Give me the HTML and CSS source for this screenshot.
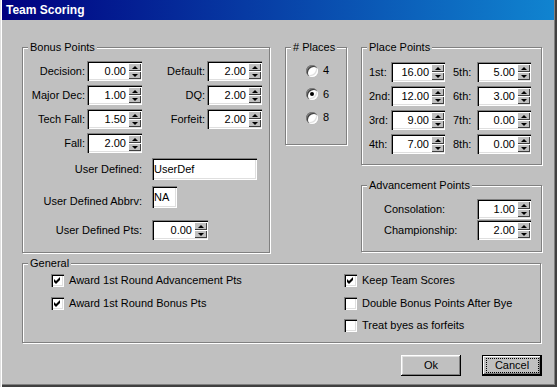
FILE: index.html
```html
<!DOCTYPE html>
<html>
<head>
<meta charset="utf-8">
<title>Team Scoring</title>
<link rel="stylesheet" href="styles.css">
</head>
<body>
<div class="window">
  <div class="titlebar">Team Scoring</div>
  <div class="body">
    <div class="top">
      <fieldset class="group bonus">
        <legend>Bonus Points</legend>
        <div class="bgrid">
          <span class="lbl">Decision:</span>
          <div class="spin"><span class="val">0.00</span><span class="arrows"><span class="ab"><i class="up"></i></span><span class="ab"><i class="dn"></i></span></span></div>
          <span class="lbl">Default:</span>
          <div class="spin"><span class="val">2.00</span><span class="arrows"><span class="ab"><i class="up"></i></span><span class="ab"><i class="dn"></i></span></span></div>
          <span class="lbl">Major Dec:</span>
          <div class="spin"><span class="val">1.00</span><span class="arrows"><span class="ab"><i class="up"></i></span><span class="ab"><i class="dn"></i></span></span></div>
          <span class="lbl">DQ:</span>
          <div class="spin"><span class="val">2.00</span><span class="arrows"><span class="ab"><i class="up"></i></span><span class="ab"><i class="dn"></i></span></span></div>
          <span class="lbl">Tech Fall:</span>
          <div class="spin"><span class="val">1.50</span><span class="arrows"><span class="ab"><i class="up"></i></span><span class="ab"><i class="dn"></i></span></span></div>
          <span class="lbl">Forfeit:</span>
          <div class="spin"><span class="val">2.00</span><span class="arrows"><span class="ab"><i class="up"></i></span><span class="ab"><i class="dn"></i></span></span></div>
          <span class="lbl">Fall:</span>
          <div class="spin"><span class="val">2.00</span><span class="arrows"><span class="ab"><i class="up"></i></span><span class="ab"><i class="dn"></i></span></span></div>
        </div>
        <div class="ud">
          <span class="udl">User Defined:</span>
          <div class="edit ud-name">UserDef</div>
          <span class="udl udl-low">User Defined Abbrv:</span>
          <div class="edit ud-abbr">NA</div>
          <span class="udl udl-pts">User Defined Pts:</span>
          <div class="spin spin-pts"><span class="val">0.00</span><span class="arrows"><span class="ab"><i class="up"></i></span><span class="ab"><i class="dn"></i></span></span></div>
        </div>
      </fieldset>

      <fieldset class="group places">
        <legend># Places</legend>
        <div class="radios">
          <div class="opt"><span class="radio"></span><span>4</span></div>
          <div class="opt"><span class="radio on"></span><span>6</span></div>
          <div class="opt"><span class="radio"></span><span>8</span></div>
        </div>
      </fieldset>

      <div class="rightcol">
        <fieldset class="group placepts">
          <legend>Place Points</legend>
          <div class="pgrid">
            <span>1st:</span>
            <div class="spin"><span class="val">16.00</span><span class="arrows"><span class="ab"><i class="up"></i></span><span class="ab"><i class="dn"></i></span></span></div>
            <span class="pl2">5th:</span>
            <div class="spin"><span class="val">5.00</span><span class="arrows"><span class="ab"><i class="up"></i></span><span class="ab"><i class="dn"></i></span></span></div>
            <span>2nd:</span>
            <div class="spin"><span class="val">12.00</span><span class="arrows"><span class="ab"><i class="up"></i></span><span class="ab"><i class="dn"></i></span></span></div>
            <span class="pl2">6th:</span>
            <div class="spin"><span class="val">3.00</span><span class="arrows"><span class="ab"><i class="up"></i></span><span class="ab"><i class="dn"></i></span></span></div>
            <span>3rd:</span>
            <div class="spin"><span class="val">9.00</span><span class="arrows"><span class="ab"><i class="up"></i></span><span class="ab"><i class="dn"></i></span></span></div>
            <span class="pl2">7th:</span>
            <div class="spin"><span class="val">0.00</span><span class="arrows"><span class="ab"><i class="up"></i></span><span class="ab"><i class="dn"></i></span></span></div>
            <span>4th:</span>
            <div class="spin"><span class="val">7.00</span><span class="arrows"><span class="ab"><i class="up"></i></span><span class="ab"><i class="dn"></i></span></span></div>
            <span class="pl2">8th:</span>
            <div class="spin"><span class="val">0.00</span><span class="arrows"><span class="ab"><i class="up"></i></span><span class="ab"><i class="dn"></i></span></span></div>
          </div>
        </fieldset>
        <fieldset class="group adv">
          <legend>Advancement Points</legend>
          <div class="agrid">
            <span>Consolation:</span>
            <div class="spin"><span class="val">1.00</span><span class="arrows"><span class="ab"><i class="up"></i></span><span class="ab"><i class="dn"></i></span></span></div>
            <span>Championship:</span>
            <div class="spin"><span class="val">2.00</span><span class="arrows"><span class="ab"><i class="up"></i></span><span class="ab"><i class="dn"></i></span></span></div>
          </div>
        </fieldset>
      </div>
    </div>

    <fieldset class="group general">
      <legend>General</legend>
      <div class="gen">
        <div class="gcol gcol-left">
          <div class="opt"><span class="check"><svg width="7" height="7" viewBox="0 0 7 7"><path d="M0 2 L2 4 L6 0 L6 3 L2 7 L0 5 Z" fill="#000"/></svg></span><span>Award 1st Round Advancement Pts</span></div>
          <div class="opt"><span class="check"><svg width="7" height="7" viewBox="0 0 7 7"><path d="M0 2 L2 4 L6 0 L6 3 L2 7 L0 5 Z" fill="#000"/></svg></span><span>Award 1st Round Bonus Pts</span></div>
        </div>
        <div class="gcol">
          <div class="opt"><span class="check"><svg width="7" height="7" viewBox="0 0 7 7"><path d="M0 2 L2 4 L6 0 L6 3 L2 7 L0 5 Z" fill="#000"/></svg></span><span>Keep Team Scores</span></div>
          <div class="opt"><span class="check"></span><span>Double Bonus Points After Bye</span></div>
          <div class="opt"><span class="check"></span><span>Treat byes as forfeits</span></div>
        </div>
      </div>
    </fieldset>

    <div class="buttons">
      <div class="btn">Ok</div>
      <div class="btn btn-default"><span class="focus">Cancel</span></div>
    </div>
  </div>
</div>
</body>
</html>
```

FILE: styles.css
```css
* { box-sizing: border-box; }
html, body { margin: 0; padding: 0; }
body {
  background: #c0c0c0;
  font-family: "Liberation Sans", Arial, sans-serif;
  font-size: 11px;
  line-height: 13px;
  color: #000;
}
.window {
  width: 557px;
  height: 387px;
  background: #c0c0c0;
  display: flex;
  flex-direction: column;
  padding: 0 3px 3px 2px;
  box-shadow: inset 1px 0 #dfdfdf, inset 2px 0 #fff,
    inset -1px -1px #404040, inset -2px -2px #404040, inset -3px -3px #808080;
}
.titlebar {
  flex: none;
  height: 20px;
  background: linear-gradient(to right, #000080, #1084d0);
  color: #fff;
  font-weight: bold;
  font-size: 12px;
  line-height: 21px;
  padding-left: 4px;
}
.body {
  padding: 21px 12px 0 20px;
}
.top {
  display: flex;
  align-items: flex-start;
}

/* group boxes */
fieldset.group {
  margin: 0;
  padding: 0;
  min-width: 0;
  border: 1px solid #808080;
  box-shadow: 1px 1px 0 #fff, inset 1px 1px 0 #fff;
}
fieldset.group legend {
  padding: 0 2px;
  margin-left: 5px;
  line-height: 13px;
  background: #c0c0c0;
}
.bonus { width: 248px; height: 212px; }
.places { width: 62px; height: 104px; margin-left: 15px !important; }
.rightcol { margin-left: 14px; display: flex; flex-direction: column; }
.placepts { width: 181px; height: 124px; }
.placepts legend, .places legend { margin-left: 4px; }
.adv { width: 181px; height: 73px; margin-top: 14px !important; }
.general { width: 519px; height: 86px; margin-top: 4px !important; }

/* spin control */
.spin {
  display: flex;
  height: 20px;
  width: 100%;
  background: #fff;
  padding: 2px 0 2px 2px;
  box-shadow: inset 1px 1px #808080, inset 2px 2px #000,
    inset -1px -1px #fff, inset -2px -2px #dfdfdf;
}
.spin .val {
  flex: 1;
  text-align: right;
  padding-right: 2px;
  line-height: 16px;
}
.arrows {
  width: 13px;
  display: flex;
  flex-direction: column;
  margin-right: 1px;
}
.ab {
  flex: 1;
  background: #c0c0c0;
  display: flex;
  align-items: center;
  justify-content: center;
  box-shadow: inset 1px 1px #fff, inset -1px -1px #404040;
}
.ab i { display: block; width: 0; height: 0; border-left: 3px solid transparent; border-right: 3px solid transparent; }
.ab i.up { border-bottom: 3px solid #000; }
.ab i.dn { border-top: 3px solid #000; }

.edit {
  background: #fff;
  height: 22px;
  padding: 0 2px;
  line-height: 22px;
  box-shadow: inset 1px 1px #808080, inset 2px 2px #000,
    inset -1px -1px #fff, inset -2px -2px #dfdfdf;
}
.ud-name { width: 105px; }
.ud-abbr { width: 25px; }

/* bonus layout */
.bgrid {
  display: grid;
  grid-template-columns: 64px 55px 65px 55px;
  grid-auto-rows: 20px;
  row-gap: 4px;
  align-items: center;
  margin-top: 7px;
}
.lbl { text-align: right; padding-right: 2px; }
.ud {
  display: grid;
  grid-template-columns: 119px auto;
  column-gap: 10px;
  row-gap: 6px;
  align-items: center;
  justify-items: start;
  margin-top: 5px;
}
.udl { justify-self: end; }
.udl-low { align-self: end; }
.udl-pts { margin-top: 6px; }
.spin-pts { width: 56px; margin-top: 6px; }

/* places */
.radios {
  display: flex;
  flex-direction: column;
  gap: 10.5px;
  margin-top: 10px;
  padding-left: 20px;
}
.opt {
  display: flex;
  align-items: center;
  gap: 5px;
  height: 13px;
  white-space: nowrap;
}
.radio {
  width: 12px;
  height: 12px;
  border-radius: 50%;
  background: #fff;
  display: flex;
  align-items: center;
  justify-content: center;
  box-shadow: inset 1px 1px 0 #808080, inset 2px 2px 0 #404040,
    inset -1px -1px 0 #fff, inset -2px -2px 0 #dfdfdf;
}
.radio.on::after {
  content: "";
  width: 4px;
  height: 4px;
  border-radius: 50%;
  background: #000;
}

/* place points */
.pgrid {
  display: grid;
  grid-template-columns: 22px 54px 32px 54px;
  grid-auto-rows: 20px;
  row-gap: 4px;
  align-items: center;
  margin-top: 8px;
  padding-left: 7px;
}
.pl2 { padding-left: 8px; }
.agrid {
  display: grid;
  grid-template-columns: 93px 54px;
  grid-auto-rows: 20px;
  row-gap: 1px;
  align-items: center;
  margin-top: 7px;
  padding-left: 22px;
}

/* general */
.gen {
  display: flex;
  padding-left: 28px;
  margin-top: 4px;
}
.gcol { display: flex; flex-direction: column; gap: 9.5px; }
.gcol-left { width: 293px; }
.check {
  width: 13px;
  height: 13px;
  flex: none;
  background: #fff;
  display: flex;
  align-items: center;
  justify-content: center;
  box-shadow: inset 1px 1px #808080, inset 2px 2px #000,
    inset -1px -1px #fff, inset -2px -2px #dfdfdf;
}
.check svg { display: block; }

/* buttons */
.buttons {
  display: flex;
  justify-content: flex-end;
  gap: 21px;
  margin-top: 12px;
}
.btn {
  width: 60px;
  height: 21px;
  display: flex;
  align-items: center;
  justify-content: center;
  background: #c0c0c0;
  box-shadow: inset -1px -1px #000, inset 1px 1px #fff,
    inset -2px -2px #808080, inset 2px 2px #dfdfdf;
}
.btn-default {
  box-shadow: inset 0 0 0 1px #000, inset -2px -2px #000, inset 2px 2px #fff,
    inset -3px -3px #808080;
}
.focus {
  width: 53px;
  height: 15px;
  border: 1px dotted #000;
  display: flex;
  align-items: center;
  justify-content: center;
}
```
